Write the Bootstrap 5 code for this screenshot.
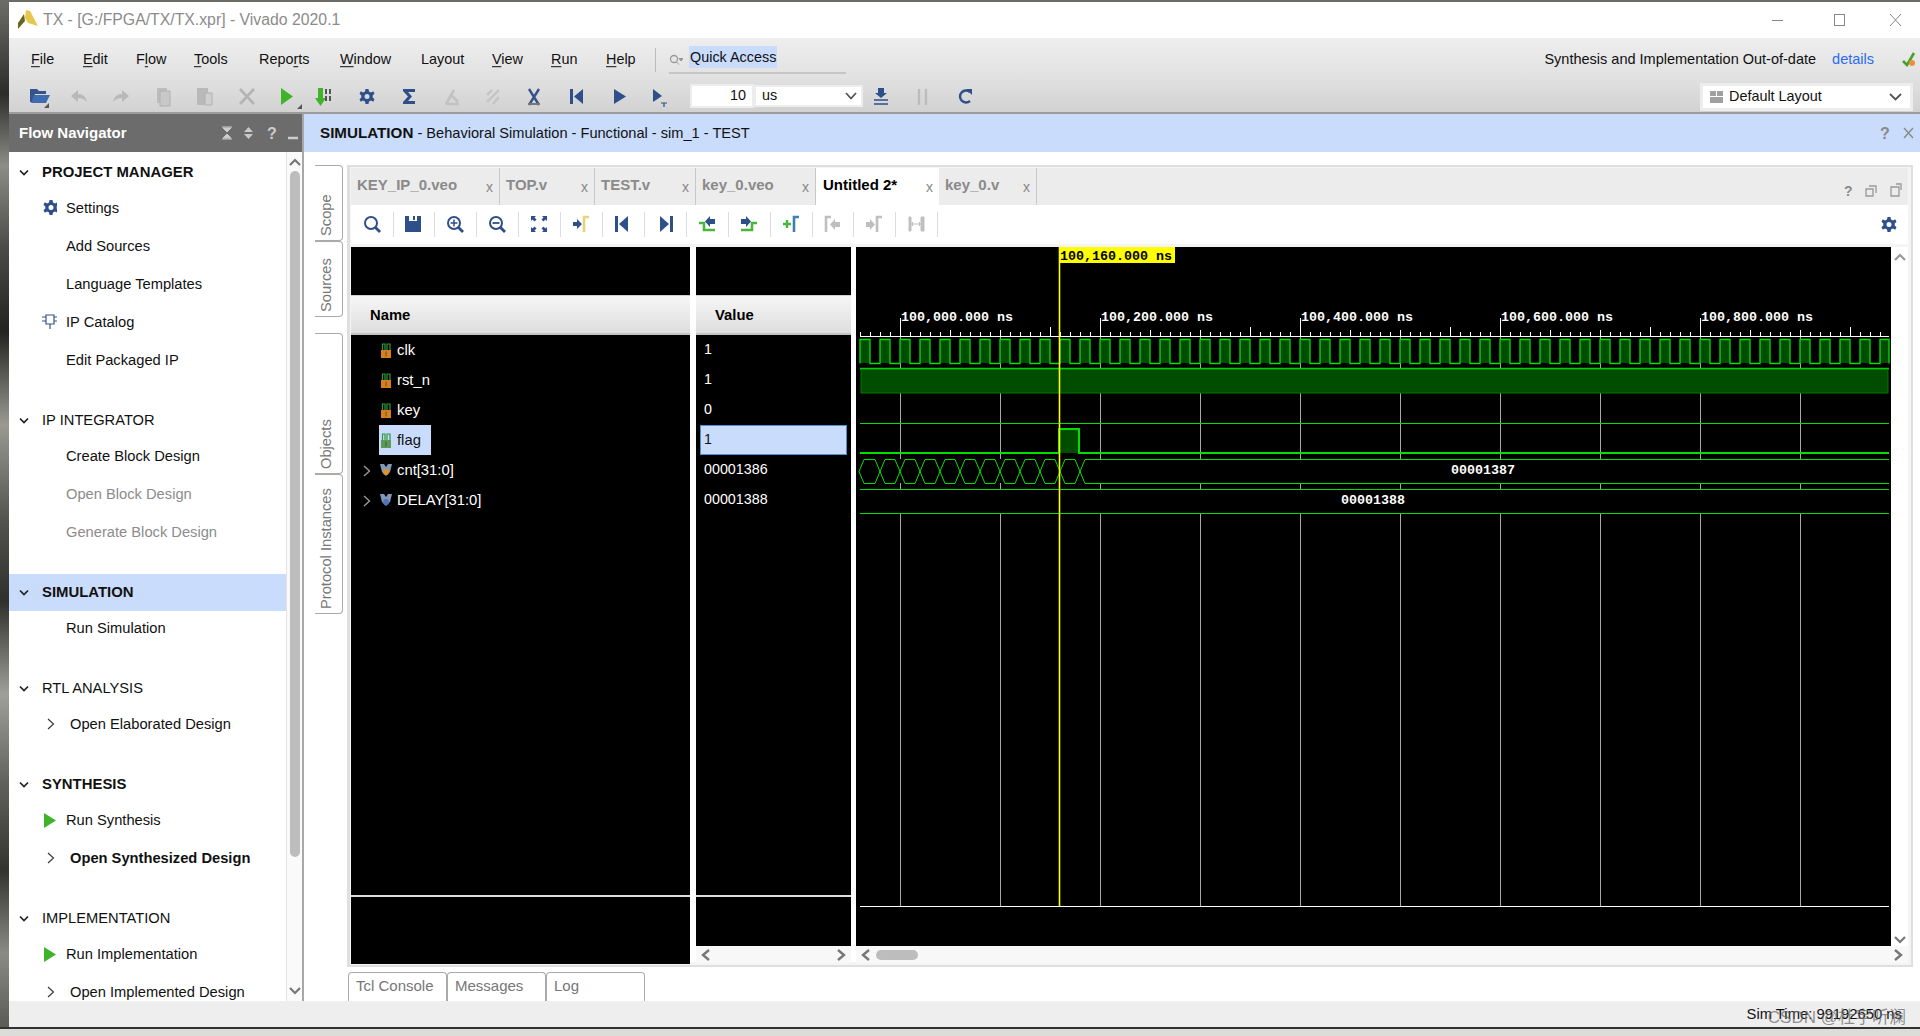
<!DOCTYPE html>
<html>
<head>
<meta charset="UTF-8">
<title>TX - Vivado 2020.1</title>
<link href="https://cdn.jsdelivr.net/npm/bootstrap@5.3.0/dist/css/bootstrap.min.css" rel="stylesheet">
<style>
    html, body { height: 100%; }
    body {
        margin: 0; overflow: hidden;
        font-family: "Liberation Sans", Arial, sans-serif; font-size: 15px; color: #111;
        background: linear-gradient(180deg, #6d6d68 0, #2c2c2a 9%, #8d8d86 16%, #4a4a47 24%, #23231f 32%, #9a9a93 41%, #55554f 50%, #2f2f2b 58%, #a0a09a 67%, #5f5f5a 76%, #34342f 84%, #8b8b85 92%, #55554f 100%);
    }
    .vv-window { margin: 2px 0 0 9px; height: 1025px; background: #fff; display: flex; flex-direction: column; }
    .vv-under { height: 9px; margin-left: 0; background: linear-gradient(180deg, #333 0, #333 2px, #dcdcd8 2px); }
    .vv-title { height: 36px; padding-left: 9px; color: #8b8b8b; font-size: 15.8px; flex: none; }
    .vv-title svg:first-child { margin-right: 5px; }
    .vv-winbtns { color: #888; width: 148px; padding-right: 18px; }
    .vv-top { height: 76px; flex: none; background: linear-gradient(180deg, #eeeeee 0, #e2e2e2 50%, #d2d2d2 100%); border-bottom: 2px solid #9c9c9c; }
    .vv-menu { height: 41px; padding-left: 22px; font-size: 14.4px; position: relative; }
    .vv-menu u { text-underline-offset: 2px; }
    .vv-menuitem { position: absolute; top: calc(50% + 1px); transform: translateY(-50%); }
    .vv-tools { height: 33px; position: relative; }
    .vv-tool { position: absolute; top: 7px; transform: translateX(-50%); display: block; }
    .vv-field { position: absolute; background: #fff; border: 2px solid #ededed; font-size: 14.4px; display: flex; align-items: center; }
    .vv-qa { background: #c9dcfb; padding: 0 1px; line-height: 22px; }
    .vv-body { flex: 1 1 auto; min-height: 0; display: flex; }
    .vv-nav { width: 295px; flex: none; display: flex; flex-direction: column; border-right: 2px solid #a8a8a8; }
    .vv-navhead { height: 38px; flex: none; background: #6c6c6c; color: #fff; font-weight: 700; padding-left: 10px; font-size: 15px; }
    .vv-navbody { flex: 1 1 auto; min-height: 0; display: flex; overflow: hidden; }
    .vv-navlist { flex: 1 1 auto; padding-top: 4px; font-size: 14.7px; }
    .vv-group { margin-bottom: 25px; }
    .vv-heading { height: 33px; padding-left: 10px; gap: 13px; }
    .vv-heading.fw-bold span { font-size: 14.9px; }
    .vv-heading.vv-sel { height: 37px; margin: -2px 0; background: #c9dcfb; }
    .vv-item { height: 38px; padding-left: 33px; }
    .vv-slot { width: 15px; margin-right: 9px; display: flex; justify-content: center; flex: none; }
    .vv-expand { padding-left: 37px; }
    .vv-expand .vv-slot { width: 10px; margin-right: 14px; }
    .vv-dim { color: #8c8c8c; }
    .vv-vbar { width: 16px; flex: none; background: #fafafa; border-left: 1px solid #e4e4e4; display: flex; flex-direction: column; align-items: center; }
    .vv-thumb { width: 10px; background: #bdbdbd; border-radius: 5px; }
    .vv-main { flex: 1 1 auto; min-width: 0; display: flex; flex-direction: column; }
    .vv-simhead { height: 38px; flex: none; background: #c9dcfb; padding: 0 4px 0 16px; font-size: 14.6px; }
    .vv-simhead b { font-size: 15.2px; }
    .vv-work { flex: 1 1 auto; min-height: 0; display: flex; padding: 13px 7px 0 11px; }
    .vv-side { width: 28px; flex: none; margin-right: 4px; display: flex; flex-direction: column; }
    .vv-sidetab { writing-mode: vertical-rl; transform: rotate(180deg); color: #777; font-size: 14.7px; border: 1px solid #aaa; border-right: 0; border-radius: 4px 0 0 4px; padding: 4px 0 0 5px; width: 28px; display: flex; align-items: center; }
    .vv-center { flex: 1 1 auto; min-width: 0; display: flex; flex-direction: column; }
    .vv-panel { height: 802px; flex: none; border: 2px solid #dfdfdf; border-left-width: 3px; padding: 1px 3px 3px 1px; margin-left: 0; display: flex; flex-direction: column; background: #f4f4f4; }
    .vv-tabs { height: 37px; flex: none; background: #ececec; display: flex; position: relative; }
    .vv-tab { color: #8a8a8a; font-weight: 700; font-size: 15px; padding: 0 0 2px 6px; border-right: 1px solid #c8c8c8; position: relative; display: flex; align-items: center; }
    .vv-tab.vv-on { background: #fff; color: #000; border-right: 0; padding-left: 7px; }
    .vv-x { position: absolute; right: 6px; top: 9px; color: #888; font-weight: 400; font-size: 14px; }
    .vv-panelctl { position: absolute; top: 15px; right: 0; }
    .vv-wavebar { height: 39px; flex: none; background: #fff; position: relative; }
    .vv-wavebar i { position: absolute; top: 7px; width: 1px; height: 25px; background: #dcdcdc; }
    .vv-panes { flex: 1 1 auto; min-height: 0; margin-top: 3px; display: flex; gap: 0; background: #fff; }
    .vv-pane { background: #000; color: #fff; display: flex; flex-direction: column; }
    .vv-names { width: 339px; flex: none; height: 717px; margin-right: 6px; }
    .vv-valwrap { width: 155px; flex: none; margin-right: 5px; display: flex; flex-direction: column; }
    .vv-vals { height: 699px; flex: none; }
    .vv-hbar { height: 17px; flex: none; background: #f8f8f8; display: flex; align-items: center; justify-content: space-between; }
    .vv-colhead { height: 40px; margin-top: 48px; padding-top: 1px; flex: none; background: linear-gradient(180deg, #f6f6f6, #dedede); color: #000; font-weight: 700; font-size: 14.8px; border-top: 1px solid #cfcfcf; border-bottom: 2px solid #c4c4c4; }
    .vv-rows { flex: 1 1 auto; min-height: 0; overflow: hidden; }
    .vv-row { height: 30px; font-size: 14.8px; position: relative; }
    .vv-name { padding-left: 28px; }
    .vv-namepick { background: #c9dcfb; color: #111; height: 30px; display: flex; align-items: center; padding: 0 10px 0 0; }
    .vv-val { padding-left: 8px; font-size: 14.3px; }
    .vv-valpick { background: #c9dcfb; color: #111; border: 1px solid #4f90c8; margin: 0 4px; padding-left: 3px; font-size: 14.3px; }
    .vv-arrow { position: absolute; left: 12px; top: 10px; }
    .vv-sigicon { flex: none; margin-right: 5px; margin-left: 1px; }
    .vv-rule { height: 2px; flex: none; background: #ddd; }
    .vv-namesbot { height: 67px; flex: none; }
    .vv-wavewrap { flex: 1 1 auto; min-width: 0; display: flex; flex-direction: column; height: 716px; }
    .vv-waverow { height: 699px; flex: none; display: flex; }
    .vv-wave { width: 1035px; height: 699px; display: block; background: #000; flex: none; }
    .vv-wave text { font-family: "Liberation Mono", "DejaVu Sans Mono", monospace; font-size: 13.33px; font-weight: 700; fill: #fff; }
    .vv-btabs { display: flex; margin-top: 5px; height: 29px; flex: none; margin-left: 1px; }
    .vv-btab { width: 99px; border: 1px solid #aaa; border-bottom: 0; border-radius: 4px 4px 0 0; color: #777; padding: 2px 0 0 7px; font-size: 15px; }
    .vv-status { height: 26px; flex: none; background: #eeeeee; position: relative; font-size: 14.8px; }
    .vv-simtime { position: absolute; right: 18px; top: 2px; }
    .vv-mark { position: absolute; right: 14px; top: 4px; color: rgba(105,105,105,.72); font-size: 17px; font-family: "Liberation Sans", "Noto Sans CJK SC", sans-serif; }
    .vv-link { color: #2a6bf0; }
</style>
</head>
<body>
<div class="vv-window">
    <div class="vv-title d-flex align-items-center">
        <svg width="20" height="20" viewBox="0 0 20 20"><path d="M8 0L12 1L20 16L10 13L7 8Z" fill="#e6c84c"/><path d="M6 4L7 11L0 19V13Z" fill="#66661f"/></svg>
        <span class="flex-grow-1">TX - [G:/FPGA/TX/TX.xpr] - Vivado 2020.1</span>
        <div class="vv-winbtns d-flex justify-content-between align-items-center">
            <svg width="12" height="12"><path d="M0 6.500H11" stroke="#888"/></svg>
            <svg width="13" height="14"><rect x="1.500" y="1.500" width="10" height="11" fill="none" stroke="#888"/></svg>
            <svg width="13" height="14"><path d="M1 1L12 13M12 1L1 13" stroke="#888" fill="none"/></svg>
        </div>
    </div>
    <div class="vv-top">
        <div class="vv-menu d-flex align-items-center">
            <span class="vv-menuitem" style="left:22px"><u>F</u>ile</span>
            <span class="vv-menuitem" style="left:74px"><u>E</u>dit</span>
            <span class="vv-menuitem" style="left:127px">F<u>l</u>ow</span>
            <span class="vv-menuitem" style="left:185px"><u>T</u>ools</span>
            <span class="vv-menuitem" style="left:250px">Repo<u>r</u>ts</span>
            <span class="vv-menuitem" style="left:331px"><u>W</u>indow</span>
            <span class="vv-menuitem" style="left:412px">Layout</span>
            <span class="vv-menuitem" style="left:483px"><u>V</u>iew</span>
            <span class="vv-menuitem" style="left:542px"><u>R</u>un</span>
            <span class="vv-menuitem" style="left:597px"><u>H</u>elp</span>
            <span class="vv-menuitem" style="left:646px;width:1px;height:24px;background:#bbb"></span>
            <svg class="vv-menuitem" style="left:660px" width="14" height="12"><circle cx="5" cy="5" r="3.500" fill="none" stroke="#999" stroke-width="1.300"/><path d="M7.500 8L10 10.500M10 4.500H14L12 7Z" stroke="#999" fill="#999" stroke-width="1"/></svg>
            <span class="vv-menuitem vv-qa" style="left:680px;top:19px">Quick Access</span>
            <span class="vv-menuitem" style="left:660px;top:35px;width:177px;height:1px;background:#aaa"></span>
            <span class="ms-auto pe-1 d-flex align-items-center" style="font-size:14.5px;padding-top:2px">
                <span>Synthesis and Implementation Out-of-date</span>
                <span class="vv-link ms-3" style="margin-right:27px">details</span>
                <svg width="15" height="15"><path d="M2 9L6 13L13 1" fill="none" stroke="#4aa02c" stroke-width="2.600"/><circle cx="11" cy="11" r="3" fill="#e8913a"/></svg>
            </span>
        </div>
        <div class="vv-tools" id="mainTools">
            <svg class="vv-tool" style="left:31px" width="22" height="22"><path d="M1 3H8L10 5H17V8H6L3 16H1Z" fill="#35538c"/><path d="M5 9H21L17 17H2Z" fill="#3f6cb0"/><path d="M15 22H20V17Z" fill="#555"/></svg>
            <svg class="vv-tool" style="left:70px" width="18" height="22"><path d="M1 10L8 4V8C13 8 16 11 17 16C14 13 12 12 8 12V16Z" fill="#b9b9b9"/></svg>
            <svg class="vv-tool" style="left:112px" width="18" height="22"><path d="M17 10L10 4V8C5 8 2 11 1 16C4 13 6 12 10 12V16Z" fill="#b9b9b9"/></svg>
            <svg class="vv-tool" style="left:155px" width="16" height="22"><path d="M1 2H11V17H1Z" fill="#bdbdbd"/><path d="M4 5H14V20H4Z" fill="#c8c8c8" stroke="#b0b0b0"/></svg>
            <svg class="vv-tool" style="left:196px" width="18" height="22"><path d="M1 2H12V19H1Z" fill="#b9b9b9"/><path d="M9 7H16V19H9Z" fill="#cfcfcf" stroke="#b0b0b0"/></svg>
            <svg class="vv-tool" style="left:238px" width="18" height="22"><path d="M2 3L16 18M16 3L2 18" stroke="#b4b4b4" stroke-width="2.600"/></svg>
            <svg class="vv-tool" style="left:281px" width="24" height="24"><path d="M3 2L15 10.500L3 19Z" fill="#3fb42a"/><path d="M19 23H24V18Z" fill="#555"/></svg>
            <svg class="vv-tool" style="left:315px" width="20" height="22"><path d="M2 2H7V12H10L4.500 20L-1 12H2Z" fill="#3fb42a" transform="translate(2 0)"/><path d="M11 3H13V8H11ZM15 3H17V8H15ZM11 10H13V15H11ZM15 10H17V15H15Z" fill="#555"/></svg>
            <svg class="vv-tool" style="left:358px" width="18" height="22"><use href="#gear"/></svg>
            <svg class="vv-tool" style="left:400px" width="18" height="22"><path d="M3 3H15V6H8L12 10.500L8 15H15V18H3V16L8 10.500L3 5Z" fill="#2f4f8a"/></svg>
            <svg class="vv-tool" style="left:443px" width="18" height="22"><path d="M3 18H16M3 18L11 4M7 8L15 16" stroke="#c2c2c2" stroke-width="2.600" fill="none"/></svg>
            <svg class="vv-tool" style="left:484px" width="18" height="22"><path d="M3 16L15 4M3 9L8 4M9 18L15 11" stroke="#c4c4c4" stroke-width="2.400" fill="none"/></svg>
            <svg class="vv-tool" style="left:525px" width="18" height="22"><path d="M4 3L14 19M14 3L4 19" stroke="#34538c" stroke-width="2.400" fill="none"/><path d="M3 18H15" stroke="#777" stroke-width="2"/></svg>
            <svg class="vv-tool" style="left:568px" width="16" height="22"><path d="M1 3H4V18H1ZM14 3V18L5 10.500Z" fill="#2f4f8a"/></svg>
            <svg class="vv-tool" style="left:611px" width="16" height="22"><path d="M2 3L14 10.500L2 18Z" fill="#2f4f8a"/></svg>
            <svg class="vv-tool" style="left:652px" width="18" height="22"><path d="M1 3L10 10L1 16Z" fill="#2f4f8a"/><path d="M9 17H15M12 17V21" stroke="#2f4f8a" stroke-width="1.200"/></svg>
            <div class="vv-field justify-content-end" style="left:681px;top:5px;width:64px;height:24px;padding-right:6px">10</div>
            <div class="vv-field justify-content-between" style="left:745px;top:6px;width:109px;height:22px;padding:0 4px 0 6px"><span>us</span><svg width="12" height="8"><path d="M1 1L6 6.500L11 1" fill="none" stroke="#555" stroke-width="1.800"/></svg></div>
            <svg class="vv-tool" style="left:872px" width="16" height="22"><path d="M5 2H11V7H14L8 12L2 7H5Z" fill="#2f4f8a"/><path d="M1 14H15M1 18H15" stroke="#2f4f8a" stroke-width="1.600"/></svg>
            <svg class="vv-tool" style="left:914px" width="12" height="22"><path d="M2 3V19M9 3V19" stroke="#bcbcbc" stroke-width="2.400"/></svg>
            <svg class="vv-tool" style="left:956px" width="16" height="22"><path d="M13 6A6 6 0 1 0 13 15" fill="none" stroke="#2f4f8a" stroke-width="2.400"/><path d="M9 3H15V9Z" fill="#2f4f8a"/></svg>
            <div class="vv-field justify-content-between" style="left:1691px;top:4px;width:213px;height:28px;padding:0 8px 0 7px;border-width:3px;font-size:14.4px"><span class="d-flex align-items-center"><svg width="13" height="12" style="margin-right:6px"><path d="M0 0H6V5H0ZM7 0H13V5H7ZM0 6H13V12H0Z" fill="#a0a0a0"/></svg>Default Layout</span><svg width="13" height="8"><path d="M1 1L6.500 6.500L12 1" fill="none" stroke="#555" stroke-width="1.800"/></svg></div>
        </div>
    </div>
    <div class="vv-body">
        <div class="vv-nav">
            <div class="vv-navhead d-flex align-items-center">
                <span class="flex-grow-1">Flow Navigator</span>
                <svg width="84" height="16"><path d="M4 2H14M4 14H14M9 7L5 3H13ZM9 9L5 13H13Z" stroke="#ccc" fill="#ccc"/><path d="M31 7H26L30.500 2L35 7ZM26 9H35L30.500 14Z" fill="#c8c8c8"/><text x="49" y="14" fill="#ccc" font-size="16" font-weight="700">?</text><path d="M70 13H80" stroke="#ccc" stroke-width="2.500"/></svg>
            </div>
            <div class="vv-navbody">
                <div class="vv-navlist" id="navList"></div>
                <div class="vv-vbar">
                    <svg width="14" height="14" class="mt-1"><path d="M2 9L7 4L12 9" fill="none" stroke="#777" stroke-width="2.200"/></svg>
                    <div class="vv-thumb" style="height:686px;margin-top:1px"></div>
                    <svg width="14" height="14" class="mt-auto mb-1"><path d="M2 5L7 10L12 5" fill="none" stroke="#777" stroke-width="2.200"/></svg>
                </div>
            </div>
        </div>
        <div class="vv-main">
            <div class="vv-simhead d-flex align-items-center">
                <span class="flex-grow-1"><b>SIMULATION</b> - Behavioral Simulation - Functional - sim_1 - TEST</span>
                <svg width="36" height="16"><text x="0" y="14" fill="#8a8a8a" font-size="16" font-weight="700">?</text><path d="M24 3L33 13M33 3L24 13" stroke="#888" stroke-width="1.300"/></svg>
            </div>
            <div class="vv-work">
                <div class="vv-side">
                    <div class="vv-sidetab" style="height:76px">Scope</div>
                    <div class="vv-sidetab" style="height:76px">Sources</div>
                    <div class="vv-sidetab mt-3" style="height:141px">Objects</div>
                    <div class="vv-sidetab" style="height:140px">Protocol Instances</div>
                </div>
                <div class="vv-center">
                    <div class="vv-panel">
                        <div class="vv-tabs">
                            <div class="vv-tab" style="width:149px">KEY_IP_0.veo<span class="vv-x">x</span></div>
                            <div class="vv-tab" style="width:95px">TOP.v<span class="vv-x">x</span></div>
                            <div class="vv-tab" style="width:101px">TEST.v<span class="vv-x">x</span></div>
                            <div class="vv-tab" style="width:120px">key_0.veo<span class="vv-x">x</span></div>
                            <div class="vv-tab vv-on" style="width:123px">Untitled 2*<span class="vv-x">x</span></div>
                            <div class="vv-tab" style="width:98px">key_0.v<span class="vv-x">x</span></div>
                            <svg class="vv-panelctl" width="64" height="16"><text x="0" y="13" fill="#8a8a8a" font-size="14" font-weight="700">?</text><path d="M22 6H29V13H22ZM25 3H32V10" fill="none" stroke="#999" stroke-width="1.300"/><path d="M47 4H55V13H47ZM52 1H57V7" fill="none" stroke="#999" stroke-width="1.300"/></svg>
                        </div>
                        <div class="vv-wavebar" id="waveBar"></div>
                        <div class="vv-panes">
                            <div class="vv-pane vv-names">
                                <div class="vv-colhead d-flex align-items-center" style="padding-left:19px">Name</div>
                                <div class="vv-rows" id="nameRows"></div>
                                <div class="vv-rule"></div>
                                <div class="vv-namesbot"></div>
                            </div>
                            <div class="vv-valwrap">
                                <div class="vv-pane vv-vals">
                                    <div class="vv-colhead d-flex align-items-center" style="padding-left:19px">Value</div>
                                    <div class="vv-rows" id="valRows"></div>
                                    <div class="vv-rule"></div>
                                    <div style="height:49px;flex:none"></div>
                                </div>
                                <div class="vv-hbar px-1">
                                    <svg width="12" height="14"><path d="M9 2L3 7L9 12" fill="none" stroke="#777" stroke-width="2.400"/></svg>
                                    <svg width="12" height="14"><path d="M3 2L9 7L3 12" fill="none" stroke="#777" stroke-width="2.400"/></svg>
                                </div>
                            </div>
                            <div class="vv-wavewrap">
                                <div class="vv-waverow">
                                    <svg class="vv-wave" id="wave" viewBox="856 247 1035 699"></svg>
                                    <div class="vv-vbar flex-grow-1" style="border:0;background:#fff">
                                        <svg width="14" height="14" class="mt-1"><path d="M2 9L7 4L12 9" fill="none" stroke="#999" stroke-width="2.200"/></svg>
                                        <svg width="14" height="14" class="mt-auto"><path d="M2 5L7 10L12 5" fill="none" stroke="#777" stroke-width="2.200"/></svg>
                                    </div>
                                </div>
                                <div class="vv-hbar px-1 justify-content-start">
                                    <svg width="12" height="14"><path d="M9 2L3 7L9 12" fill="none" stroke="#777" stroke-width="2.400"/></svg>
                                    <div class="vv-thumb ms-1" style="width:42px;height:10px"></div>
                                    <svg width="12" height="14" class="ms-auto"><path d="M3 2L9 7L3 12" fill="none" stroke="#777" stroke-width="2.400"/></svg>
                                </div>
                            </div>
                        </div>
                    </div>
                    <div class="vv-btabs">
                        <div class="vv-btab">Tcl Console</div>
                        <div class="vv-btab">Messages</div>
                        <div class="vv-btab">Log</div>
                    </div>
                </div>
            </div>
        </div>
    </div>
    <div class="vv-status">
        <span class="vv-simtime">Sim Time: 99192650 ns</span>
        <span class="vv-mark">CSDN @杜宇听澜</span>
    </div>
</div>
<div class="vv-under"></div>

<svg width="0" height="0" class="position-absolute">
    <symbol id="gear" viewBox="0 0 18 22"><path d="M7.500 3H10.500L11 5.500L13 6.500L15.200 5.300L16.500 7.800L14.700 9.500V11.500L16.500 13.200L15.200 15.700L13 14.500L11 15.500L10.500 18H7.500L7 15.500L5 14.500L2.800 15.700L1.500 13.200L3.300 11.500V9.500L1.500 7.800L2.800 5.300L5 6.500L7 5.500Z M9 8A2.500 2.500 0 1 0 9 13A2.500 2.500 0 1 0 9 8Z" fill="#2f4f8a" fill-rule="evenodd"/></symbol>
</svg>

<script src="https://cdn.jsdelivr.net/npm/bootstrap@5.3.0/dist/js/bootstrap.bundle.min.js"></script>
<script>
    // flow navigator
    const play = '<svg width="14" height="17"><path d="M1 1L13 8.500L1 16Z" fill="#3fb42a"/></svg>';
    const gearIcon = '<svg width="18" height="22"><use href="#gear" width="18" height="22"/></svg>';
    const ipIcon = '<svg width="16" height="16"><path d="M4 1H12V10H4ZM8 10V15M0 3H4M0 7H4M12 3H16M12 7H16" fill="none" stroke="#35538c" stroke-width="1.200"/></svg>';
    const chevR = '<svg width="8" height="12"><path d="M1 1L6.500 6L1 11" fill="none" stroke="#333" stroke-width="1.100"/></svg>';
    const groups = [
        { t: 'PROJECT MANAGER', b: 1, items: [['Settings', gearIcon], ['Add Sources'], ['Language Templates'], ['IP Catalog', ipIcon], ['Edit Packaged IP']] },
        { t: 'IP INTEGRATOR', items: [['Create Block Design'], ['Open Block Design', '', 'dim'], ['Generate Block Design', '', 'dim']] },
        { t: 'SIMULATION', b: 1, sel: 1, items: [['Run Simulation']] },
        { t: 'RTL ANALYSIS', items: [['Open Elaborated Design', chevR, 'exp']] },
        { t: 'SYNTHESIS', b: 1, items: [['Run Synthesis', play], ['Open Synthesized Design', chevR, 'exp bold']] },
        { t: 'IMPLEMENTATION', items: [['Run Implementation', play], ['Open Implemented Design', chevR, 'exp']] }
    ];
    document.getElementById('navList').innerHTML = groups.map(g => {
        const rows = g.items.map(it => {
            const f = it[2] || '';
            return '<div class="vv-item d-flex align-items-center ' + (f.includes('exp') ? 'vv-expand ' : '') + (f.includes('dim') ? 'vv-dim ' : '') + (f.includes('bold') ? 'fw-bold ' : '') + '">'
                + '<span class="vv-slot">' + (it[1] || '') + '</span><span>' + it[0] + '</span></div>';
        }).join('');
        return '<div class="vv-group"><div class="vv-heading d-flex align-items-center ' + (g.sel ? 'vv-sel ' : '') + (g.b ? 'fw-bold' : '') + '">'
            + '<svg width="10" height="8"><path d="M1 1.500L5 5.500L9 1.500" fill="none" stroke="#222" stroke-width="1.700"/></svg><span>' + g.t + '</span></div>' + rows + '</div>';
    }).join('');

    // signal rows
    const sigIcon = (c, bus) => bus
        ? '<svg class="vv-sigicon" width="12" height="14"><path d="M0 1H4L6 4L8 1H12L10 9L6 13L2 9Z" fill="#8298b8"/><circle cx="6" cy="9" r="3" fill="' + c + '"/></svg>'
        : '<svg class="vv-sigicon" width="12" height="15"><path d="M2.500 7V1H5V7M7 7V1H10V7" fill="none" stroke="#2f9a3c" stroke-width="1.200"/><rect x="1" y="7" width="10" height="8" fill="' + c + '"/><path d="M6 8.500V13.500" stroke="#553" stroke-width="1"/></svg>';
    const sigs = [['clk', '1', '#d9801e'], ['rst_n', '1', '#d9801e'], ['key', '0', '#d9801e'], ['flag', '1', '#5c9a5c'], ['cnt[31:0]', '00001386', '#e0912c', 1], ['DELAY[31:0]', '00001388', '#4f74b8', 1]];
    const arrow = '<svg class="vv-arrow" width="8" height="12"><path d="M1 1L6.500 6L1 11" fill="none" stroke="#999" stroke-width="1.400"/></svg>';
    document.getElementById('nameRows').innerHTML = sigs.map(s => {
        const inner = sigIcon(s[2], s[3]) + '<span>' + s[0] + '</span>';
        return '<div class="vv-row vv-name d-flex align-items-center">' + (s[3] ? arrow : '')
            + (s[0] === 'flag' ? '<div class="vv-namepick">' + inner + '</div>' : inner) + '</div>';
    }).join('');
    document.getElementById('valRows').innerHTML = sigs.map(s =>
        '<div class="vv-row d-flex align-items-center ' + (s[0] === 'flag' ? 'vv-valpick' : 'vv-val') + '">' + s[1] + '</div>').join('');

    // wave toolbar, one icon per 42px slot
    const B = '#2f4f8a', G = '#46b93a', Y = '#e8d27a', L = '#bfbfbf';
    const mag = m => '<circle cx="8" cy="8" r="6" fill="none" stroke="' + B + '" stroke-width="2"/><path d="M12.500 12.500L17 17" stroke="' + B + '" stroke-width="2.800"/>' + m;
    const tools = [
        mag(''),
        '<path d="M1 1H17V17H1Z M5 1V6H13V1H11V5H9V1Z" fill="' + B + '" fill-rule="evenodd"/>',
        mag('<path d="M4.500 8H11.500M8 4.500V11.500" stroke="' + B + '" stroke-width="1.500"/>'),
        mag('<path d="M4.500 8H11.500" stroke="' + B + '" stroke-width="1.800"/>'),
        '<path d="M1 1H6L4.500 2.500L6.500 4.500L4.500 6.500L2.500 4.500L1 6ZM17 1V6L15.500 4.500L13.500 6.500L11.500 4.500L13.500 2.500L12 1ZM1 17V12L2.500 13.500L4.500 11.500L6.500 13.500L4.500 15.500L6 17ZM17 17H12L13.500 15.500L11.500 13.500L13.500 11.500L15.500 13.500L17 12Z" fill="' + B + '"/>',
        '<path d="M1 7H5V4L10 9L5 14V11H1Z" fill="' + B + '"/><path d="M12 17V2H17" fill="none" stroke="' + Y + '" stroke-width="2.600"/>',
        '<path d="M1 1H4V17H1ZM14 1V17L5 9Z" fill="' + B + '"/>',
        '<path d="M14 1H17V17H14ZM4 1V17L13 9Z" fill="' + B + '"/>',
        '<path d="M1 8H6V15H17" fill="none" stroke="' + G + '" stroke-width="2.600"/><path d="M17 4V9H12V12L7 6.500L12 1V4Z" fill="' + B + '"/>',
        '<path d="M17 8H12V15H1" fill="none" stroke="' + G + '" stroke-width="2.600"/><path d="M1 4V9H6V12L11 6.500L6 1V4Z" fill="' + B + '"/>',
        '<path d="M1 9H9M5 5V13" stroke="' + G + '" stroke-width="2.400"/><path d="M12 17V2H17" fill="none" stroke="#3f7fb5" stroke-width="2.600"/>',
        '<path d="M3 17V2H8" fill="none" stroke="' + L + '" stroke-width="2.600"/><path d="M17 7V12H12V15L7 9.500L12 4V7Z" fill="' + L + '"/>',
        '<path d="M1 7H5V4L10 9.500L5 15V12H1Z" fill="' + L + '"/><path d="M12 17V2H17" fill="none" stroke="' + L + '" stroke-width="2.600"/>',
        '<path d="M2 2H4V16H2ZM14 2H17V16H14ZM5 9H13M6 7L4.500 9L6 11M12 7L13.500 9L12 11" fill="' + L + '" stroke="' + L + '"/>'
    ];
    document.getElementById('waveBar').innerHTML = tools.map((p, i) => {
        const x = 371.5 + i * 41.9 - 351;
        return '<svg class="position-absolute" style="left:' + (x - 9) + 'px;top:10px" width="18" height="18">' + p + '</svg>'
            + '<i style="left:' + (x + 21) + 'px"></i>';
    }).join('') + '<svg class="position-absolute" style="right:10px;top:9px" width="18" height="22"><use href="#gear" width="18" height="22"/></svg>';

    // waveform canvas, x and y are screen pixels thanks to the viewBox
    const BR = '#00e000', X0 = 860, X1 = 1889, CUR = 1059;
    let s = '';
    const line = (d, c, w) => { s += '<path d="' + d + '" fill="none" stroke="' + c + '" stroke-width="' + (w || 1) + '"/>'; };
    let grid = '';
    for (let x = 900; x < 1889; x += 100) grid += 'M' + x + '.5 336V459M' + x + '.5 483V489M' + x + '.5 513V906';
    line(grid, '#a8a8a8');
    // ruler
    let tick = '';
    for (let x = X0; x <= X1; x += 10) {
        const tickTop = (x - 900) % 200 === 0 ? 318 : (x - 1050) % 200 === 0 ? 327 : x % 50 === 0 ? 330 : 332;
        tick += 'M' + x + '.5 ' + tickTop + 'V336';
    }
    line(tick + 'M' + X0 + ' 336.500H' + X1, '#fff');
    [[900, '100,000.000'], [1100, '100,200.000'], [1300, '100,400.000'], [1500, '100,600.000'], [1700, '100,800.000']].forEach(r => {
        s += '<text x="' + (r[0] + 1) + '" y="321">' + r[1] + ' ns</text>';
    });
    // clk
    let clk = 'M' + X0 + ' 363.500', fill = '';
    for (let x = X0; x < X1; x += 20) {
        const e = Math.min(x + 10, X1);
        clk += 'L' + x + ' 339.500L' + e + ' 339.500L' + e + ' 363.500L' + Math.min(x + 20, X1) + ' 363.500';
        fill += 'M' + x + ' 340H' + e + 'V363H' + x + 'Z';
    }
    s += '<path d="' + fill + '" fill="#004d00"/>';
    line(clk, BR, 1.3);
    // rst_n
    s += '<rect x="' + (X0 + 1) + '" y="369" width="' + (X1 - X0 - 2) + '" height="24" fill="#004d00" stroke="#007a00"/>';
    line('M' + X0 + ' 368.500H' + X1, '#00d000', 1.6);
    // key
    line('M' + X0 + ' 423.500H' + X1, BR);
    // flag
    s += '<rect x="' + CUR + '" y="429" width="20" height="24" fill="#004d00"/>';
    line('M' + X0 + ' 453H' + CUR + 'V429H1079V453H' + X1, BR, 2);
    // cnt bus
    const busTop = 459.5, busBot = 483.5;
    let bus = '', prev = 859;
    for (let x = 880; x <= 1080; x += 20) {
        bus += 'M' + (prev + 5) + ' ' + busTop + 'H' + (x - 5) + 'L' + (x + 5) + ' ' + busBot + 'M' + (prev + 5) + ' ' + busBot + 'H' + (x - 5) + 'L' + (x + 5) + ' ' + busTop;
        prev = x;
    }
    bus += 'M859 471.500L864 ' + busTop + 'M859 471.500L864 ' + busBot + 'M1085 ' + busTop + 'H' + X1 + 'M1085 ' + busBot + 'H' + X1;
    line(bus, BR);
    s += '<text x="1451" y="474">00001387</text>';
    // DELAY bus
    line('M' + X0 + ' 489.500H' + X1 + 'M' + X0 + ' 513.500H' + X1, BR);
    s += '<text x="1341" y="504">00001388</text>';
    // bottom rule and cursor
    line('M' + X0 + ' 906.500H' + X1, '#fff');
    line('M' + CUR + '.5 247V906', '#ffff00', 1.6);
    s += '<rect x="' + CUR + '" y="247" width="116" height="16" fill="#ffff00"/>';
    s += '<text x="' + (CUR + 1) + '" y="260" style="fill:#000">100,160.000 ns</text>';
    document.getElementById('wave').innerHTML = s;
</script>
</body>
</html>
